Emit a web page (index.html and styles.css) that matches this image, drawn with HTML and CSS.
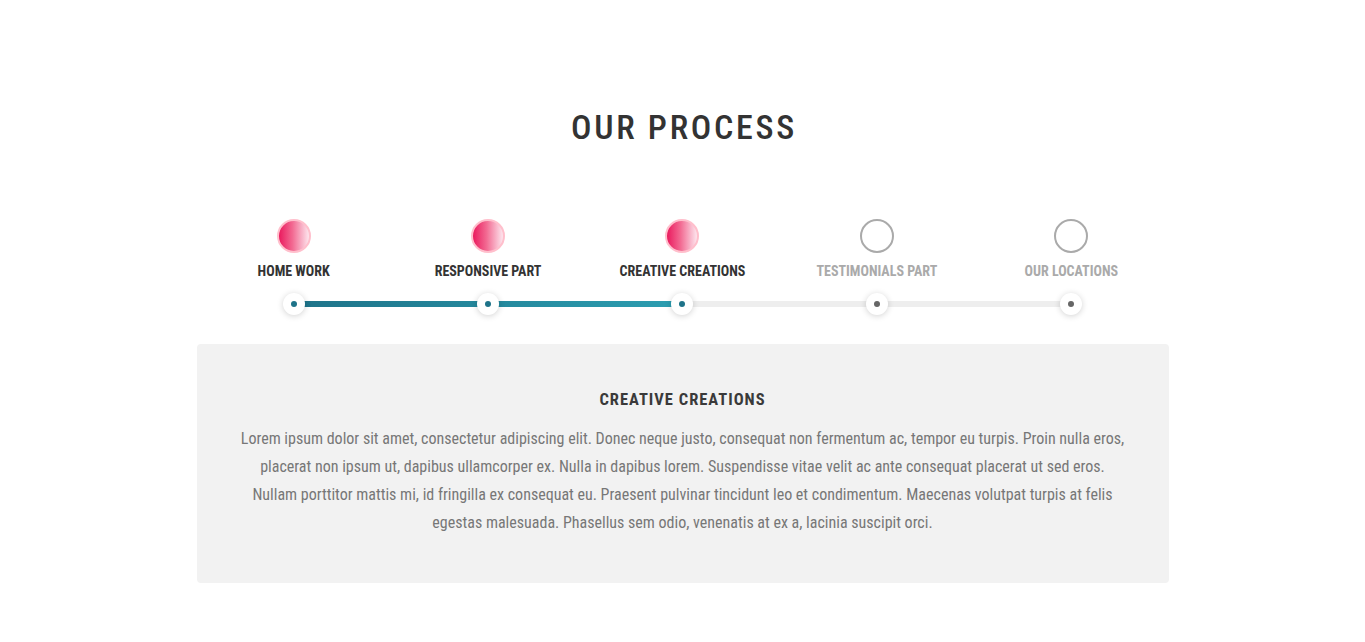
FILE: index.html
```html
<!DOCTYPE html>
<html lang="en">
<head>
<meta charset="utf-8">
<title>Our Process</title>
<link rel="stylesheet" href="styles.css">
</head>
<body>
<section class="process">
  <h2 class="process-title">OUR PROCESS</h2>
  <div class="steps">
    <div class="step done"><span class="step-icon"></span><span class="step-label">HOME WORK</span></div>
    <div class="step done"><span class="step-icon"></span><span class="step-label">RESPONSIVE PART</span></div>
    <div class="step done"><span class="step-icon"></span><span class="step-label">CREATIVE CREATIONS</span></div>
    <div class="step"><span class="step-icon"></span><span class="step-label">TESTIMONIALS PART</span></div>
    <div class="step"><span class="step-icon"></span><span class="step-label">OUR LOCATIONS</span></div>
  </div>
  <div class="track">
    <div class="track-line">
      <div class="track-fill" style="width:50%"></div>
    </div>
    <div class="dots">
      <div class="dot-cell"><span class="dot active"></span></div>
      <div class="dot-cell"><span class="dot active"></span></div>
      <div class="dot-cell"><span class="dot active"></span></div>
      <div class="dot-cell"><span class="dot"></span></div>
      <div class="dot-cell"><span class="dot"></span></div>
    </div>
  </div>
  <div class="panel">
    <h3 class="panel-title">CREATIVE CREATIONS</h3>
    <p class="panel-text">Lorem ipsum dolor sit amet, consectetur adipiscing elit. Donec neque justo, consequat non fermentum ac, tempor eu turpis. Proin nulla eros, placerat non ipsum ut, dapibus ullamcorper ex. Nulla in dapibus lorem. Suspendisse vitae velit ac ante consequat placerat ut sed eros. Nullam porttitor mattis mi, id fringilla ex consequat eu. Praesent pulvinar tincidunt leo et condimentum. Maecenas volutpat turpis at felis egestas malesuada. Phasellus sem odio, venenatis at ex a, lacinia suscipit orci.</p>
  </div>
</section>
</body>
</html>
```
FILE: styles.css
```css
* { box-sizing: border-box; }
html, body { margin: 0; padding: 0; background: #fff; }
body {
  font-family: "Roboto Condensed", "Liberation Sans Narrow", Roboto, "Liberation Sans", sans-serif;
  color: #333;
}
.process {
  width: 972px;
  margin: 0 auto;
  padding-top: 107px;
}
.process-title {
  margin: 0;
  text-align: center;
  font-size: 34px;
  line-height: 40px;
  font-weight: 500;
  letter-spacing: 2.7px;
  color: #333;
  padding-left: 3px;
}
.steps {
  display: grid;
  grid-template-columns: repeat(5, 1fr);
  margin-top: 72px;
}
.step {
  display: flex;
  flex-direction: column;
  align-items: center;
}
.step-icon {
  width: 34px;
  height: 34px;
  border-radius: 50%;
  border: 2px solid #aaa;
  background: #fff;
}
.step.done .step-icon {
  border-color: #ffbfcc;
  background: linear-gradient(to right, #ea1a5e 0%, #f26a92 45%, #fde6ee 100%);
}
.step-label {
  margin-top: 10px;
  font-size: 14px;
  line-height: 16px;
  font-weight: 700;
  color: #aaa;
}
.step.done .step-label { color: #333; }
.track {
  position: relative;
  margin-top: 14px;
  height: 22px;
}
.track-line {
  position: absolute;
  left: 10%;
  right: 10%;
  top: 8px;
  height: 6px;
  background: #eeeeee;
}
.track-fill {
  height: 100%;
  background: linear-gradient(to right, #1e7389, #2c9eb1);
}
.dots {
  position: relative;
  display: grid;
  grid-template-columns: repeat(5, 1fr);
  height: 22px;
}
.dot-cell {
  display: flex;
  justify-content: center;
}
.dot {
  width: 22px;
  height: 22px;
  border-radius: 50%;
  background: #fff;
  box-shadow: 0 1px 6px rgba(0, 0, 0, 0.18);
  display: flex;
  align-items: center;
  justify-content: center;
}
.dot::after {
  content: "";
  width: 6px;
  height: 6px;
  border-radius: 50%;
  background: #666;
}
.dot.active::after { background: #1e7389; }
.panel {
  margin-top: 29px;
  background: #f2f2f2;
  border-radius: 4px;
  padding: 45px 40px 46px;
  text-align: center;
}
.panel-title {
  margin: 0;
  font-size: 16.5px;
  line-height: 22px;
  font-weight: 700;
  letter-spacing: 1px;
  color: #3a3a3a;
}
.panel-text {
  margin: 14px 0 0;
  font-size: 16px;
  line-height: 28px;
  color: #777;
}
```
